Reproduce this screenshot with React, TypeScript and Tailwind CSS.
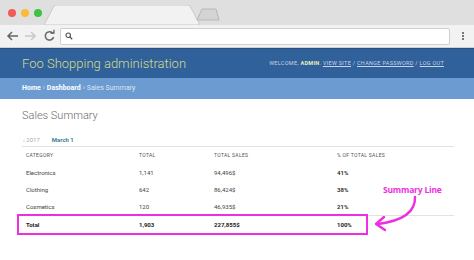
import React from "react";

const rows = [
  { cat: "Electronics", total: "1,141", sales: "94,496$", pct: "41%" },
  { cat: "Clothing", total: "642", sales: "86,424$", pct: "38%" },
  { cat: "Cosmetics", total: "120", sales: "46,935$", pct: "21%" },
];

const cols = "grid grid-cols-[113px_75px_123px_1fr] px-1";

export default function App() {
  return (
    <div className="relative w-[474px] h-[260px] overflow-hidden bg-white font-['Roboto',sans-serif]">
      {/* title bar */}
      <div className="flex items-end h-[25px] bg-[#dfdfdf]">
        <div className="flex items-center gap-[5px] pl-[8px] self-center">
          <span className="w-[8px] h-[8px] rounded-full bg-[#f05b57]" />
          <span className="w-[8px] h-[8px] rounded-full bg-[#f8bc3a]" />
          <span className="w-[8px] h-[8px] rounded-full bg-[#3ec244]" />
        </div>
        <svg width="178" height="20" viewBox="0 0 178 20" className="ml-[2px]">
          <path d="M0 20 L10 1 Q11 0 13 0 L143 0 Q145 0 146 1 L156 20 Z" fill="#f2f2f2" stroke="#c9c9c9" strokeWidth="1" />
          <path d="M155 15 L160 4 L174 4 L177 15 Z" fill="#d4d4d4" stroke="#b8b8b8" strokeWidth="1" transform="translate(-2 0)" />
        </svg>
      </div>
      {/* toolbar */}
      <div className="flex items-center h-[23px] bg-[#f2f2f2] border-b border-[#d0d0d0]">
        <svg width="60" height="16" viewBox="0 0 60 16" className="shrink-0">
          <path d="M18 8 H8 M12 4 L8 8 L12 12" stroke="#666" strokeWidth="1.5" fill="none" />
          <path d="M25 8 H35 M31 4 L35 8 L31 12" stroke="#c8c8c8" strokeWidth="1.5" fill="none" />
          <path d="M53 5.5 A4.2 4.2 0 1 0 53.6 9" stroke="#666" strokeWidth="1.5" fill="none" />
          <path d="M50.5 5 L54 5 L54 1.8" stroke="#666" strokeWidth="1.3" fill="none" />
        </svg>
        <div className="flex items-center w-[390px] h-[17px] bg-white border border-[#cfcfcf] rounded-[2px] pl-[4px]">
          <svg width="8" height="8" viewBox="0 0 10 10">
            <circle cx="4" cy="4" r="2.8" stroke="#555" strokeWidth="1.4" fill="none" />
            <path d="M6 6 L9 9" stroke="#555" strokeWidth="1.6" />
          </svg>
        </div>
        <div className="flex flex-col items-center gap-[1px] ml-[12px]">
          <span className="w-[2px] h-[2px] bg-[#777]" />
          <span className="w-[2px] h-[2px] bg-[#777]" />
          <span className="w-[2px] h-[2px] bg-[#777]" />
        </div>
      </div>
      {/* admin header */}
      <div className="flex items-center justify-between h-[30px] bg-[#30619a] border-t border-[#284f80] pl-[22px] pr-[30px]">
        <span className="text-[13px] text-[#d3dc8e] font-light">Foo Shopping administration</span>
        <span className="text-[5.5px] tracking-[0.3px] text-[#c6d4e6] uppercase">
          Welcome, <b className="text-[#e8efb8] font-bold">admin</b>.{" "}
          <span className="underline">View site</span> /{" "}
          <span className="underline">Change password</span> /{" "}
          <span className="underline">Log out</span>
        </span>
      </div>
      {/* breadcrumbs */}
      <div className="flex items-center h-[21px] bg-[#6b9bd0] pl-[22px] text-[7px] text-white">
        <span className="font-bold">Home</span>
        <span className="mx-[2px] text-[#d6e4f3]">›</span>
        <span className="font-bold">Dashboard</span>
        <span className="mx-[2px] text-[#d6e4f3]">›</span>
        <span className="text-[#dbe6f3]">Sales Summary</span>
      </div>
      {/* content */}
      <div className="pl-[22px] pr-[20px]">
        <div className="pt-[9px] text-[11px] text-[#6b6b6b] font-light">Sales Summary</div>
        <div className="flex items-center mt-[10px] h-[10px] text-[6px] px-[1px]">
          <span className="text-[#aaa]">‹ 2017</span>
          <span className="ml-[12px] text-[#447e9b] font-bold">March 1</span>
        </div>
        <div className="mt-[1px] border-t border-[#e3e3e3]">
          <div className={`${cols} h-[18px] items-center text-[5px] tracking-[0.3px] text-[#555] uppercase`}>
            <span>Category</span>
            <span>Total</span>
            <span>Total sales</span>
            <span>% of total sales</span>
          </div>
          {rows.map((r) => (
            <div key={r.cat} className={`${cols} h-[16.8px] items-center text-[6px] text-[#444]`}>
              <span>{r.cat}</span>
              <span>{r.total}</span>
              <span>{r.sales}</span>
              <span className="font-bold text-[#333]">{r.pct}</span>
            </div>
          ))}
          <div className={`${cols} h-[19px] items-center text-[6px] font-bold text-[#222] border-t border-[#e3e3e3]`}>
            <span>Total</span>
            <span>1,903</span>
            <span>227,855$</span>
            <span>100%</span>
          </div>
        </div>
      </div>
      {/* annotation */}
      <div className="absolute left-[17px] top-[214px] w-[351px] h-[21px] border-2 border-[#ee2ee0]" />
      <span className="absolute left-[383px] top-[184px] text-[8.5px] font-bold text-[#ee2ee0] font-['Open_Sans',sans-serif] tracking-[-0.2px]">
        Summary Line
      </span>
      <svg className="absolute left-[370px] top-[195px]" width="60" height="40" viewBox="0 0 60 40">
        <path d="M45 2 Q46 24 8 29" stroke="#ee2ee0" strokeWidth="2.4" fill="none" strokeLinecap="round" />
        <path d="M14 22 L6 29 L15 35" stroke="#ee2ee0" strokeWidth="2.4" fill="none" strokeLinecap="round" strokeLinejoin="round" />
      </svg>
    </div>
  );
}
